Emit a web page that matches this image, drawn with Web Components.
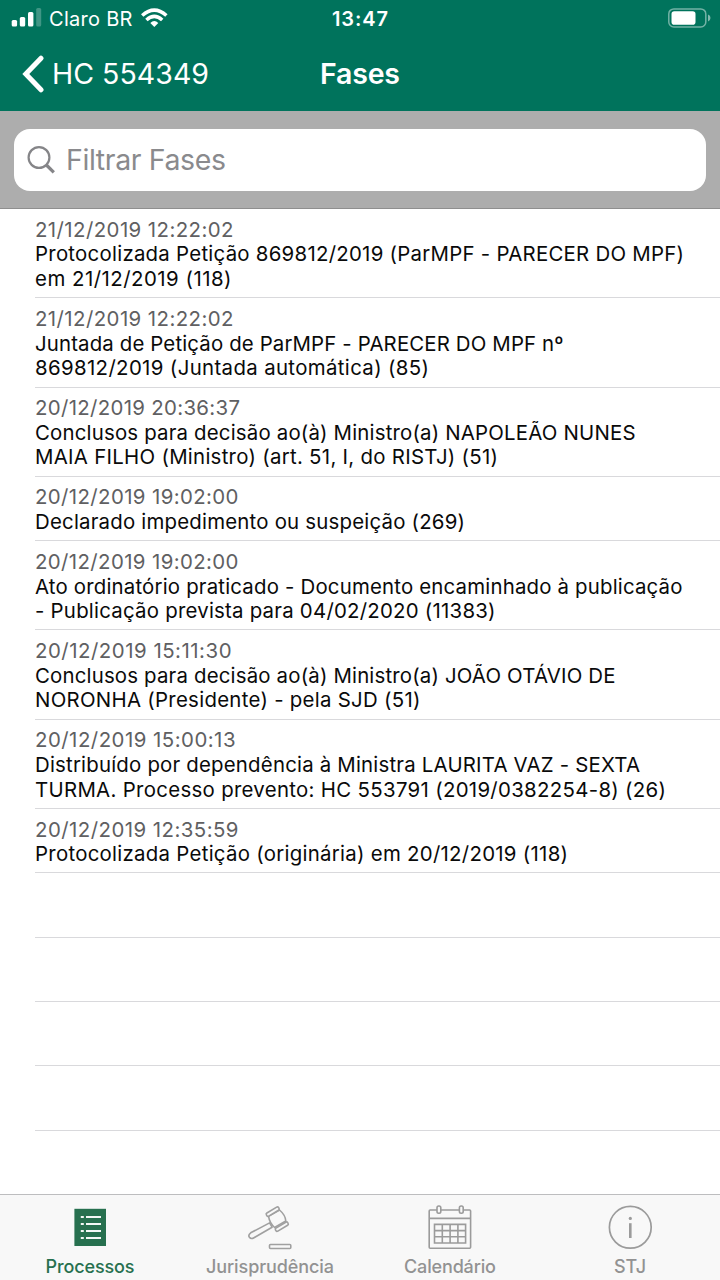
<!DOCTYPE html>
<html lang="pt-BR">
<head>
<meta charset="utf-8">
<title>Fases</title>
<style>
    html, body {
        margin: 0;
        background: #fff;
    }
    body {
        font-family: Inter, "Liberation Sans", sans-serif;
        width: 720px;
        height: 1280px;
        overflow: hidden;
    }
</style>
</head>
<body>
<fases-app></fases-app>
<script>
(function () {
    function define(name, html, setup) {
        const template = document.createElement("template");
        template.innerHTML = html;
        customElements.define(name, class extends HTMLElement {
            connectedCallback() {
                if (this.shadowRoot) return;
                this.attachShadow({ mode: "open" }).appendChild(template.content.cloneNode(true));
                if (setup) setup(this, this.shadowRoot);
            }
        });
    }

    // one line of text, tracked out so that it fills the given width
    define("fit-text", `
        <style>
            :host { display: flex; }
            span { white-space: pre; flex: none; }
        </style>
        <span></span>
    `, (host, root) => {
        const span = root.querySelector("span");
        const text = host.getAttribute("text");
        span.textContent = text;
        const width = Number(host.getAttribute("width"));
        const natural = span.getBoundingClientRect().width;
        const spacing = (width - natural) / (text.length - 1);
        span.style.letterSpacing = spacing + "px";
        span.style.marginRight = -spacing + "px";
    });

    define("status-bar", `
        <style>
            :host { display: grid; grid-template-columns: 1fr auto 1fr; align-items: center; height: 37px; color: #fff; font-size: 20px; line-height: 24px; }
            .left { display: flex; align-items: center; padding-left: 11px; }
            .left fit-text { margin: 0 8px 0 7px; }
            .time { font-weight: 600; }
            .battery { justify-self: end; margin-right: 9px; }
            svg { display: block; position: relative; top: -1px; }
        </style>
        <div class="left">
            <svg width="31" height="20" viewBox="0 0 31 20" fill="#fff">
                <rect x=".7" y="12" width="5.4" height="6.5" rx="1.5"/>
                <rect x="8.8" y="9" width="5.4" height="9.5" rx="1.5"/>
                <rect x="17" y="4" width="5.4" height="14.5" rx="1.5"/>
                <rect x="25.2" y="0" width="5" height="18.5" rx="1.5" opacity=".25"/>
            </svg>
            <fit-text text="Claro BR" width="83.5"></fit-text>
            <svg width="27" height="20" viewBox="0 0 27 20" fill="none" stroke="#fff" stroke-width="3.5">
                <path d="M1.2 7.5Q13.3-3.4 25.4 7.5"/>
                <path d="M5.4 12Q13.3 4.9 21.2 12"/>
                <path d="M9.3 15Q13.3 11.2 17.3 15L13.3 19Z" fill="#fff" stroke="none"/>
            </svg>
        </div>
        <fit-text class="time" text="13:47" width="56"></fit-text>
        <svg class="battery" width="43" height="20" viewBox="0 0 43 20">
            <rect x=".8" y=".9" width="37" height="18" rx="5" fill="none" stroke="#fff" stroke-opacity=".45" stroke-width="1.5"/>
            <rect x="3.5" y="3.3" width="24" height="13.4" rx="2.8" fill="#fff"/>
            <path d="M40 6.5Q42.5 7.3 42.5 10T40 13.5Z" fill="#fff" opacity=".5"/>
        </svg>
    `);

    define("nav-bar", `
        <style>
            :host { display: grid; grid-template-columns: 1fr auto 1fr; align-items: center; height: 73px; color: #fff; font-size: 28.5px; line-height: 34px; }
            .back { display: flex; align-items: center; padding-left: 21px; }
            .title { font-weight: 600; }
            svg { display: block; margin-right: 8px; }
        </style>
        <div class="back">
            <svg width="23" height="38" viewBox="0 0 23 38" fill="none" stroke="#fff" stroke-width="5" stroke-linecap="round" stroke-linejoin="miter">
                <path d="M20 3.2L4.8 19L20 34.8"/>
            </svg>
            <fit-text text="HC 554349" width="157"></fit-text>
        </div>
        <fit-text class="title" text="Fases" width="80"></fit-text>
    `);

    define("search-bar", `
        <style>
            :host { display: block; box-sizing: border-box; height: 98px; padding: 18px 14px 0; background: #adadad; border-bottom: 1px solid #8f8f8f; }
            .field { display: flex; align-items: center; box-sizing: border-box; height: 62px; padding-left: 13px; background: #fff; border-radius: 16px; color: #8a8a8d; font-size: 28.5px; line-height: 34px; }
            svg { display: block; margin-right: 11px; }
            fit-text { padding-bottom: 1px; }
        </style>
        <div class="field">
            <svg width="28" height="28" viewBox="0 0 28 28" fill="none" stroke="#858588">
                <circle cx="12" cy="11.5" r="10.4" stroke-width="2.2"/>
                <path d="M19.4 19L26.8 26.4" stroke-width="3.2"/>
            </svg>
            <fit-text text="Filtrar Fases" width="160"></fit-text>
        </div>
    `);

    define("fase-item", `
        <style>
            :host { display: block; box-sizing: border-box; height: 64.35px; margin-left: 35px; padding-top: 7.7px; border-bottom: 1px solid #d9d9dc; font-size: 20.4px; line-height: 24.5px; color: #0a0a0a; }
            :host([lines="2"]) { height: 89.25px; }
            .date { color: #606062; line-height: 25.8px; }
        </style>
        <div></div>
    `, (host, root) => {
        const item = host.item;
        if (!item) return;
        host.setAttribute("lines", item.lines.length);
        root.querySelector("div").innerHTML =
            `<fit-text class="date" text="${item.date[0]}" width="${item.date[1]}"></fit-text>` +
            item.lines.map(l => `<fit-text text="${l[0]}" width="${l[1]}"></fit-text>`).join("");
    });

    const fases = [
        { date: ["21/12/2019 12:22:02", 198.5], lines: [["Protocolizada Petição 869812/2019 (ParMPF - PARECER DO MPF)", 649], ["em 21/12/2019 (118)", 196.5]] },
        { date: ["21/12/2019 12:22:02", 198.5], lines: [["Juntada de Petição de ParMPF - PARECER DO MPF nº", 528.5], ["869812/2019 (Juntada automática) (85)", 394]] },
        { date: ["20/12/2019 20:36:37", 205], lines: [["Conclusos para decisão ao(à) Ministro(a) NAPOLEÃO NUNES", 600.5], ["MAIA FILHO (Ministro) (art. 51, I, do RISTJ) (51)", 463]] },
        { date: ["20/12/2019 19:02:00", 203.5], lines: [["Declarado impedimento ou suspeição (269)", 430]] },
        { date: ["20/12/2019 19:02:00", 203.5], lines: [["Ato ordinatório praticado - Documento encaminhado à publicação", 647.5], ["- Publicação prevista para 04/02/2020 (11383)", 460.5]] },
        { date: ["20/12/2019 15:11:30", 196.5], lines: [["Conclusos para decisão ao(à) Ministro(a) JOÃO OTÁVIO DE", 580.5], ["NORONHA (Presidente) - pela SJD (51)", 385.5]] },
        { date: ["20/12/2019 15:00:13", 200.5], lines: [["Distribuído por dependência à Ministra LAURITA VAZ - SEXTA", 605], ["TURMA. Processo prevento: HC 553791 (2019/0382254-8) (26)", 631]] },
        { date: ["20/12/2019 12:35:59", 203.5], lines: [["Protocolizada Petição (originária) em 20/12/2019 (118)", 533]] }
    ];

    define("fase-list", `
        <style>
            :host { display: block; flex: 1; min-height: 0; overflow: hidden; background: #fff; }
        </style>
    `, (host, root) => {
        fases.forEach(item => {
            const row = document.createElement("fase-item");
            row.item = item;
            root.appendChild(row);
        });
        // blank rows under the last entry
        for (let i = 0; i < 4; i++) {
            root.appendChild(document.createElement("fase-item"));
        }
    });

    define("tab-item", `
        <style>
            :host { display: flex; flex: 1; flex-direction: column; align-items: center; padding-top: 10px; color: #929292; font-size: 18px; font-weight: 500; line-height: 22px; }
            :host([active]) { color: #27704f; }
            .icon { height: 46px; margin-bottom: 5px; }
        </style>
        <div class="icon"><slot></slot></div>
    `, (host, root) => {
        const label = document.createElement("fit-text");
        label.setAttribute("text", host.getAttribute("label"));
        label.setAttribute("width", host.getAttribute("width"));
        root.appendChild(label);
    });

    define("tab-bar", `
        <style>
            :host { display: flex; box-sizing: border-box; height: 86px; background: #f8f8f8; border-top: 1px solid #bdbdbf; }
            svg { display: block; }
        </style>
        <tab-item active label="Processos" width="89">
            <svg width="46" height="46" viewBox="0 0 46 46">
                <rect x="7.4" y="3.8" width="31.6" height="37.2" fill="#27704f"/>
                <path d="M13.8 12h3M13.8 19h3M13.8 26h3M13.8 33h3M19 12h15M19 19h15M19 26h15M19 33h15" stroke="#f4f8f6" stroke-width="2"/>
            </svg>
        </tab-item>
        <tab-item label="Jurisprudência" width="128">
            <svg width="46" height="46" viewBox="0 0 46 46" fill="#f8f8f8" stroke="#a0a0a0" stroke-width="1.6" stroke-linejoin="round">
                <path d="M22.6 17.9L3.7 27.8Q.8 30 2.4 32.3Q4 34.4 7 32.7L25.1 22.2Z"/>
                <path d="M21.5 11.2L32.5 5Q38.4 10 38.8 16L27.6 22.5Q22.5 18 21.5 11.2Z"/>
                <rect x="-7.1" y="-1.8" width="14.2" height="3.6" rx="1.4" transform="translate(25.7 6.6) rotate(-31)"/>
                <rect x="-7.1" y="-1.8" width="14.2" height="3.6" rx="1.4" transform="translate(34.8 21.7) rotate(-31)"/>
                <rect x="22.5" y="39.5" width="21.3" height="4" rx="1"/>
            </svg>
        </tab-item>
        <tab-item label="Calendário" width="92">
            <svg width="46" height="46" viewBox="0 0 46 46" fill="none" stroke="#9b9b9b" stroke-width="1.6">
                <rect x="2.2" y="5" width="41.4" height="38.3" rx="1"/>
                <path d="M2.2 13.4H43.6"/>
                <rect x="10" y="1" width="3.8" height="7.2" rx="1.7" fill="#f8f8f8"/>
                <rect x="32.4" y="1" width="3.8" height="7.2" rx="1.7" fill="#f8f8f8"/>
                <path d="M7.5 19.4H38.6V38H7.5ZM7.5 25.6H38.6M7.5 31.8H38.6M15.3 19.4V38M23.1 19.4V38M30.9 19.4V38"/>
            </svg>
        </tab-item>
        <tab-item label="STJ" width="32">
            <svg width="46" height="46" viewBox="0 0 46 46" fill="none" stroke="#9b9b9b">
                <circle cx="23.3" cy="22.3" r="20.9" stroke-width="1.7"/>
                <path d="M23.3 18.2V33" stroke-width="2.6"/>
                <circle cx="23.3" cy="13.4" r="1.6" fill="#9b9b9b" stroke="none"/>
            </svg>
        </tab-item>
    `);

    define("fases-app", `
        <style>
            :host { display: flex; flex-direction: column; width: 720px; height: 1280px; }
            header { background: #00735c; height: 111px; }
        </style>
        <header>
            <status-bar></status-bar>
            <nav-bar></nav-bar>
        </header>
        <search-bar></search-bar>
        <fase-list></fase-list>
        <tab-bar></tab-bar>
    `);
})();
</script>
</body>
</html>
